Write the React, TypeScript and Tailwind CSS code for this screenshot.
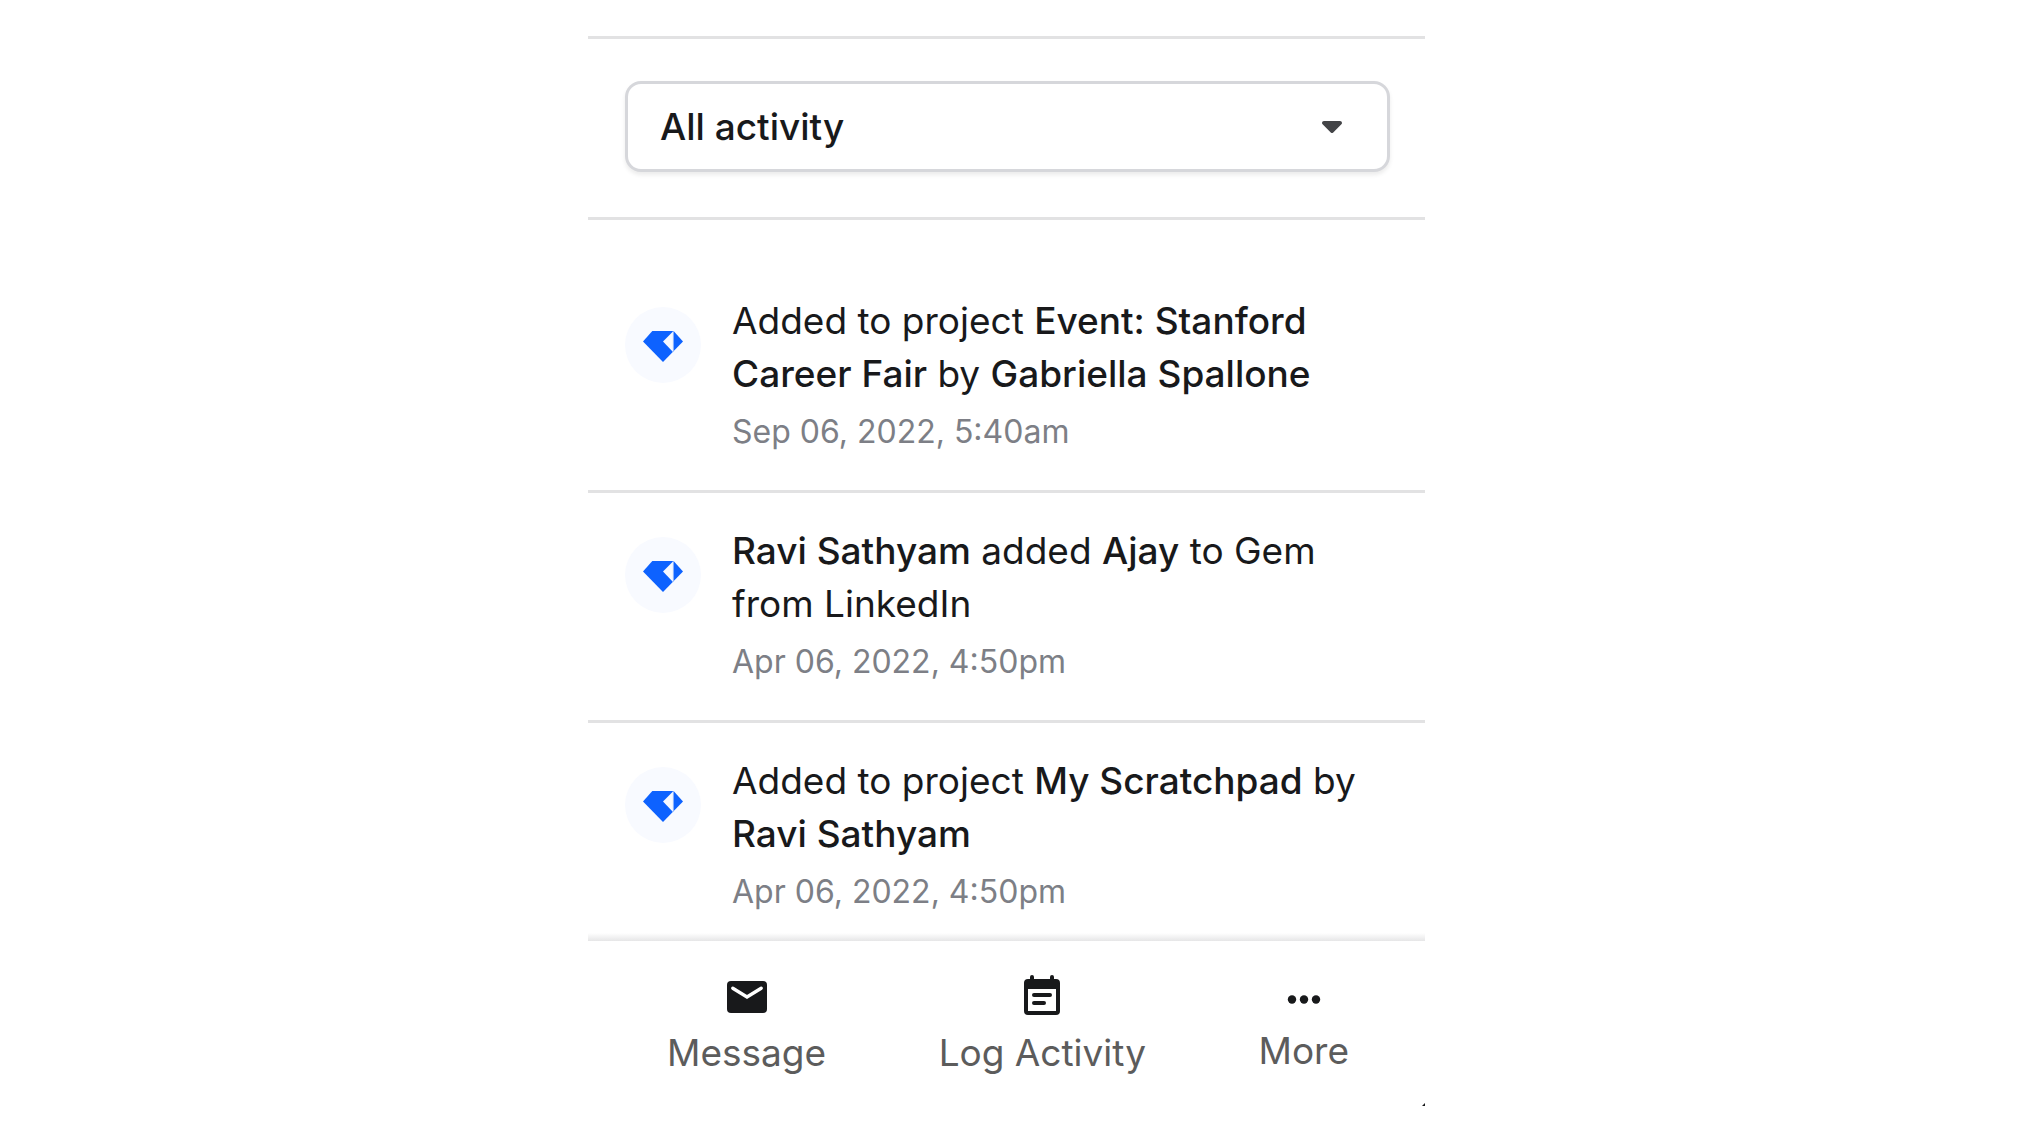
import { useState } from "react";

type Activity = {
  parts: { text: string; strong?: boolean }[];
  time: string;
};

const activities: Activity[] = [
  {
    parts: [
      { text: "Added to project " },
      { text: "Event: Stanford Career Fair", strong: true },
      { text: " by " },
      { text: "Gabriella Spallone", strong: true },
    ],
    time: "Sep 06, 2022, 5:40am",
  },
  {
    parts: [
      { text: "Ravi Sathyam", strong: true },
      { text: " added " },
      { text: "Ajay", strong: true },
      { text: " to Gem from LinkedIn" },
    ],
    time: "Apr 06, 2022, 4:50pm",
  },
  {
    parts: [
      { text: "Added to project " },
      { text: "My Scratchpad", strong: true },
      { text: " by " },
      { text: "Ravi Sathyam", strong: true },
    ],
    time: "Apr 06, 2022, 4:50pm",
  },
];

function GemLogo() {
  return (
    <svg viewBox="0 0 40 34" className="w-10 h-[34px]" aria-hidden="true">
      <path d="M9.3 3H30.6L40 13.6 20 34 0 13.6z" fill="#0d62ff" />
      <path d="M30 3.6V24L20 13.6z" fill="#f7f9ff" />
      <path d="M30.3 3V23.6" stroke="#b4cdff" strokeWidth="0.9" />
    </svg>
  );
}

function MailIcon() {
  return (
    <svg viewBox="0 0 24 24" className="size-12" aria-hidden="true">
      <rect x="2" y="4" width="20" height="16" rx="2" fill="#18191b" />
      <path
        d="M4.9 7.6 12 12l7.100-4.400"
        fill="none"
        stroke="#fff"
        strokeWidth="1.7"
        strokeLinecap="round"
      />
    </svg>
  );
}

function NoteIcon() {
  return (
    <svg viewBox="0 0 24 24" className="size-12" aria-hidden="true">
      <path
        d="M7 1a1 1 0 0 1 1 1v1h8V2a1 1 0 0 1 2 0v1h1a2 2 0 0 1 2 2v14a2 2 0 0 1-2 2H5a2 2 0 0 1-2-2V5a2 2 0 0 1 2-2h1V2a1 1 0 0 1 1-1zM5 8v11h14V8z"
        fill="#18191b"
        fillRule="evenodd"
      />
      <path
        d="M8 11h8M8 15h5"
        stroke="#18191b"
        strokeWidth="2"
        strokeLinecap="round"
      />
    </svg>
  );
}

function MoreIcon() {
  return (
    <svg viewBox="0 0 48 46" className="w-12 h-[46px]" aria-hidden="true" fill="#18191b">
      <circle cx="12" cy="26.5" r="4.2" />
      <circle cx="24" cy="26.5" r="4.2" />
      <circle cx="36" cy="26.5" r="4.2" />
    </svg>
  );
}

const actions = [
  { label: "Message", icon: MailIcon },
  { label: "Log Activity", icon: NoteIcon },
  { label: "More", icon: MoreIcon },
];

export default function App() {
  const [filter, setFilter] = useState("all");

  return (
    <div className="min-h-screen bg-white pt-9 pr-[11px] font-['Inter',sans-serif] text-[#18191b]">
      <main className="mx-auto flex w-full max-w-[837px] flex-col">
        <div className="border-y-[3px] border-[#e2e2e3] pt-[42px] pr-[35px] pb-[45px] pl-[37px]">
          <div className="relative">
            <select
              aria-label="Filter activity"
              value={filter}
              onChange={(e) => setFilter(e.target.value)}
              className="block h-[91px] w-full appearance-none rounded-2xl border-[3px] border-[#d6d7db] bg-white pr-20 pl-8 text-[37px] font-medium shadow-[0_3px_4px_rgba(0,0,0,0.08)]"
            >
              <option value="all">All activity</option>
              <option value="projects">Projects</option>
              <option value="messages">Messages</option>
            </select>
            <svg
              viewBox="0 0 20 12"
              className="pointer-events-none absolute top-10 right-12 h-3 w-5"
              aria-hidden="true"
            >
              <path
                d="M2 0h16c1.800 0 2.600 2 1.400 3.300l-7.900 8a2.100 2.100 0 0 1-3 0L.6 3.300C-.6 2 .2 0 2 0z"
                fill="#434447"
              />
            </svg>
          </div>
        </div>

        <ul className="divide-y-[3px] divide-[#e2e2e3] pt-[43px]">
          {activities.map((activity, i) => (
            <li key={i} className="flex gap-[31px] px-[37px] pt-[31px] pb-[37px] last:pb-5">
              <div className="mt-[13px] flex size-[76px] shrink-0 items-center justify-center rounded-full bg-[#f8faff]">
                <GemLogo />
              </div>
              <div>
                <p className="text-[37px] leading-[53px]">
                  {activity.parts.map((part, j) =>
                    part.strong ? (
                      <strong key={j} className="font-medium">
                        {part.text}
                      </strong>
                    ) : (
                      part.text
                    )
                  )}
                </p>
                <p className="mt-[10px] text-[32px] leading-[43px] text-[#7d7f86]">
                  {activity.time}
                </p>
              </div>
            </li>
          ))}
        </ul>

        {/* soft edge above the action bar */}
        <div className="h-2 bg-linear-to-t from-[#e6e6e7] to-white" />
        <nav className="flex items-start justify-between bg-white pt-8 pr-[76px] pl-[79px]">
          {actions.map(({ label, icon: Icon }) => (
            <button
              key={label}
              type="button"
              className="flex flex-col items-center gap-[5px] text-[37px] leading-[53px] text-[#5c5c5c]"
            >
              <Icon />
              {label}
            </button>
          ))}
        </nav>
        <svg viewBox="0 0 3 3" className="mt-6 size-[3px] self-end" aria-hidden="true">
          <path d="M3 0v3H0z" fill="#18191b" />
        </svg>
      </main>
    </div>
  );
}
